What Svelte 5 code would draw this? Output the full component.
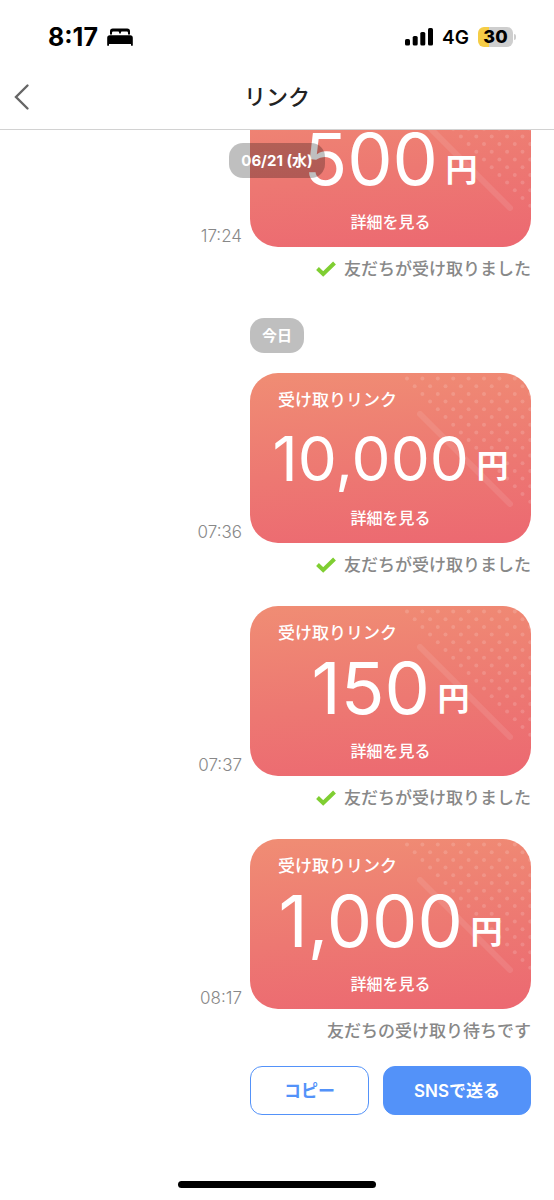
<script lang="ts">
	let links = $state([
		{ day: null, time: '17:24', amount: 500, received: true },
		{ day: '今日', time: '07:36', amount: 10000, received: true },
		{ day: null, time: '07:37', amount: 150, received: true },
		{ day: null, time: '08:17', amount: 1000, received: false }
	]);

	/* Rows of dots, each one starting half a step further right */
	const dots: { x: number; y: number }[] = [];
	for (let row = 0; row < 17; row++) {
		for (let x = 157 + row * 7.7; x < 284; x += 15.4) {
			dots.push({ x, y: 5.5 + row * 7.7 });
		}
	}
</script>

<svelte:head>
	<title>リンク</title>
</svelte:head>

<div class="app">
	<header>
		<div class="status-bar">
			<div class="clock">
				<span>8:17</span>
				<svg width="26" height="18" viewBox="0 0 26 18" aria-hidden="true">
					<path d="M3 6.6V3.2Q3 0.4 5.8 0.4H20.2Q23 0.4 23 3.2V6.6H21V4.8Q21 3.6 19.8 3.6H15Q13.8 3.6 13.8 4.8V5.6H12.2V4.8Q12.2 3.6 11 3.6H6.2Q5 3.6 5 4.8V6.6Z" />
					<path d="M2.8 7.2H23.2Q25.8 7.2 25.8 9.8V17.2Q25.8 17.8 25.2 17.8H24.6Q24 17.8 24 17.2V16H2V17.2Q2 17.8 1.4 17.8H0.8Q0.2 17.8 0.2 17.2V9.8Q0.2 7.2 2.8 7.2Z" />
				</svg>
			</div>
			<div class="signals">
				<svg width="28" height="18" viewBox="0 0 28 18" aria-hidden="true">
					<rect x="0" y="11" width="5" height="6.5" rx="1.6" />
					<rect x="7.7" y="8" width="5" height="9.5" rx="1.6" />
					<rect x="15.3" y="4" width="5" height="13.5" rx="1.6" />
					<rect x="23" y="0" width="5" height="17.5" rx="1.6" />
				</svg>
				<span class="network">4G</span>
				<span class="battery">30</span>
			</div>
		</div>
		<nav>
			<button class="back" aria-label="戻る">
				<svg width="16" height="28" viewBox="0 0 16 28" aria-hidden="true">
					<path d="M13.5 2.5L2 14L13.5 25.5" />
				</svg>
			</button>
			<h1>リンク</h1>
		</nav>
	</header>

	<main>
		<span class="chip floating">06/21 (水)</span>

		{#each links as link}
			{#if link.day}
				<span class="chip">{link.day}</span>
			{/if}
			<section>
				<div class="row">
					<time>{link.time}</time>
					<article>
						<svg class="pattern" viewBox="0 0 281 170" aria-hidden="true">
							{#each dots as dot}
								<circle cx={dot.x} cy={dot.y} r="2" />
							{/each}
							<path d="M170 41L260 131" />
						</svg>
						<h2>受け取りリンク</h2>
						<p class="amount">
							<strong class:long={link.amount >= 10000}>{link.amount.toLocaleString('en-US')}</strong>
							<span>円</span>
						</p>
						<a href="#detail">詳細を見る</a>
					</article>
				</div>
				<p class="state">
					{#if link.received}
						<svg width="20" height="16" viewBox="0 0 20 16" aria-hidden="true">
							<path d="M1.5 7.5L7.2 13L18.5 2" />
						</svg>
						友だちが受け取りました
					{:else}
						友だちの受け取り待ちです
					{/if}
				</p>
			</section>
		{/each}

		<div class="actions">
			<button class="copy">コピー</button>
			<button class="send">SNSで送る</button>
		</div>
	</main>

	<div class="home-bar"></div>
</div>

<style>
	:global(body) {
		background: #fff;
	}

	.app {
		position: relative;
		display: flex;
		flex-direction: column;
		height: 100vh;
		overflow: hidden;
		font-family: Inter, 'Noto Sans CJK JP', sans-serif;
		color: #222;
	}

	h1,
	h2,
	p {
		margin: 0;
	}

	button {
		font-family: inherit;
		cursor: pointer;
	}

	header {
		flex: none;
		border-bottom: 1px solid #d2d2d2;
	}

	.status-bar {
		display: flex;
		justify-content: space-between;
		align-items: center;
		height: 64px;
		padding: 10px 41px 0 48px;
		box-sizing: border-box;
		color: #000;
	}

	.clock,
	.signals {
		display: flex;
		align-items: center;
		gap: 9px;
	}

	.clock {
		font-size: 25px;
		font-weight: 700;
	}

	.network {
		font-size: 19px;
		font-weight: 600;
	}

	.battery {
		position: relative;
		width: 35px;
		border-radius: 6px;
		background: linear-gradient(to right, #f5cd46 30%, #cecece 30%);
		font-size: 18px;
		font-weight: 800;
		line-height: 20px;
		text-align: center;
	}

	.battery::after {
		content: '';
		position: absolute;
		top: 7px;
		right: -3px;
		width: 2px;
		height: 6px;
		border-radius: 0 2px 2px 0;
		background: #cecece;
	}

	nav {
		display: grid;
		grid-template-columns: 48px 1fr 48px;
		align-items: center;
		height: 65px;
	}

	.back {
		display: flex;
		padding: 0 0 0 14px;
		border: 0;
		background: none;
	}

	.back path {
		fill: none;
		stroke: #666;
		stroke-width: 2.4;
		stroke-linecap: round;
	}

	h1 {
		font-size: 22px;
		font-weight: 500;
		line-height: 32px;
		text-align: center;
	}

	/* Anchored to the newest link, older ones run under the header */
	main {
		position: relative;
		display: flex;
		flex: 1;
		flex-direction: column;
		justify-content: flex-end;
		min-height: 0;
		padding: 0 23px 85px;
		overflow: hidden;
	}

	section {
		flex: none;
	}

	section + section {
		margin-top: 29px;
	}

	.chip {
		flex: none;
		align-self: center;
		margin: 37px 0 20px;
		padding: 0 12px;
		border-radius: 14px;
		background: rgba(0, 0, 0, 0.25);
		color: #fff;
		font-size: 15px;
		font-weight: 700;
		line-height: 35px;
	}

	.floating {
		position: absolute;
		top: 13px;
		z-index: 1;
		margin: 0;
	}

	.row {
		display: flex;
		justify-content: flex-end;
		align-items: flex-end;
		gap: 8px;
	}

	time {
		color: #888;
		font-size: 17px;
		font-weight: 300;
		line-height: 22px;
	}

	article {
		position: relative;
		display: grid;
		grid-template-rows: 54px 86px 30px;
		width: 281px;
		height: 170px;
		border-radius: 28px;
		background: linear-gradient(175deg, #f08d74, #ed7872 55%, #ec6871);
		color: #fff;
		overflow: hidden;
	}

	.pattern {
		position: absolute;
		inset: 0;
	}

	.pattern circle {
		fill: #fff;
		opacity: 0.15;
	}

	.pattern path {
		stroke: #fff;
		stroke-width: 6;
		stroke-linecap: round;
		opacity: 0.09;
	}

	h2,
	.amount,
	article a {
		position: relative;
	}

	h2 {
		padding-left: 28px;
		font-size: 17px;
		font-weight: 500;
		line-height: 54px;
	}

	.amount {
		font-size: 32px;
		font-weight: 700;
		line-height: 86px;
		text-align: center;
		white-space: nowrap;
	}

	.amount strong {
		font-size: 72px;
		font-weight: 400;
		line-height: 0;
	}

	.amount .long {
		font-size: 62px;
	}

	.amount span {
		line-height: 0;
		vertical-align: 4px;
	}

	article a {
		color: inherit;
		font-size: 16px;
		font-weight: 500;
		line-height: 10px;
		text-align: center;
		text-decoration: none;
	}

	.state {
		display: flex;
		justify-content: flex-end;
		align-items: center;
		gap: 8px;
		margin-top: 10px;
		color: #888;
		font-size: 17px;
		font-weight: 500;
		line-height: 24px;
	}

	.state path {
		fill: none;
		stroke: #7fce32;
		stroke-width: 4;
	}

	.actions {
		display: flex;
		flex: none;
		align-self: flex-end;
		gap: 14px;
		width: 281px;
		margin-top: 23px;
	}

	.actions button {
		height: 49px;
		padding: 0 0 2px;
		border: 1px solid #5392f9;
		border-radius: 12px;
		font-size: 17px;
		font-weight: 600;
	}

	.copy {
		flex: 4;
		background: #fff;
		color: #5392f9;
	}

	.send {
		flex: 5;
		background: #5392f9;
		color: #fff;
	}

	.home-bar {
		position: absolute;
		bottom: 12px;
		left: 50%;
		width: 198px;
		height: 7px;
		margin-left: -99px;
		border-radius: 4px;
		background: #000;
	}
</style>
